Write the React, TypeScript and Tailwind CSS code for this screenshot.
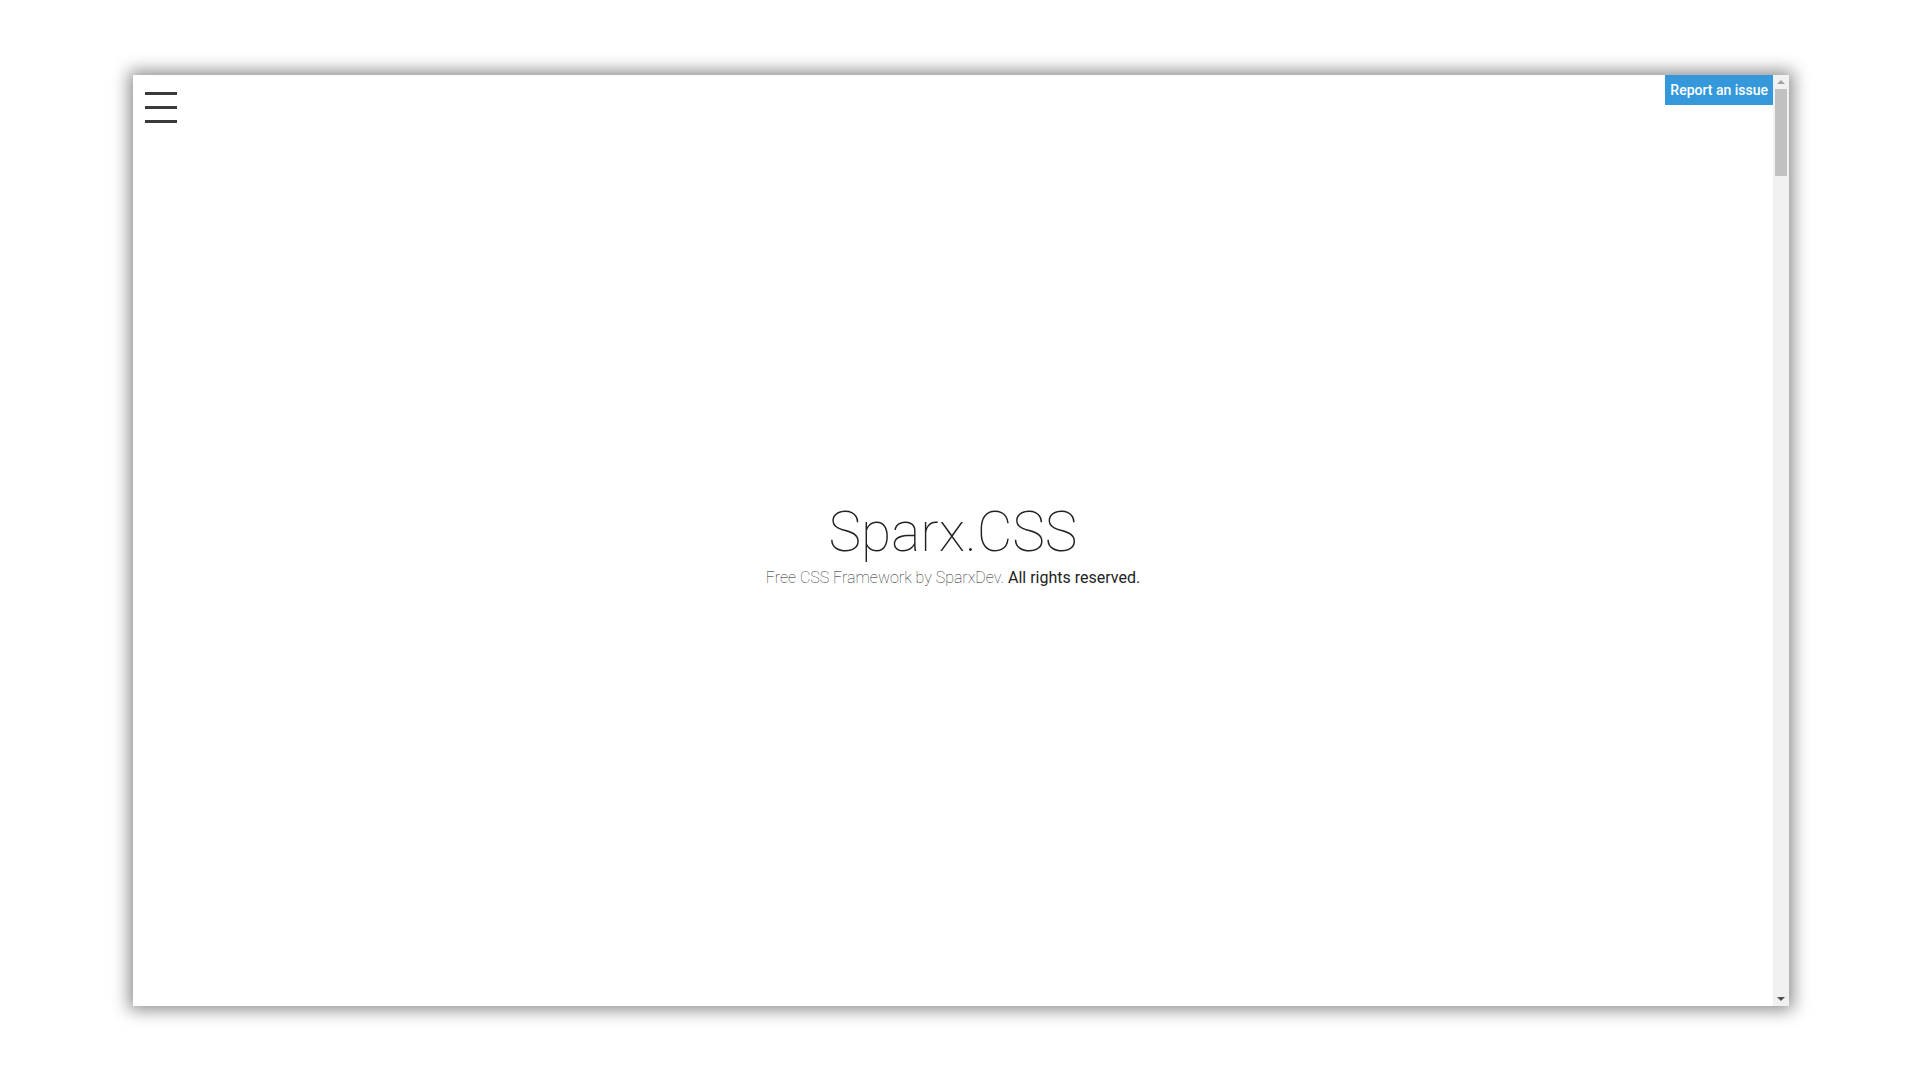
export default function App() {
  return (
    <div className="w-[1920px] h-[1080px] bg-white overflow-hidden">
      <div className="ml-[133px] mt-[75px] w-[1656px] h-[931px] flex bg-white shadow-[0_0_16px_4px_rgba(0,0,0,0.45)]">
        <main className="relative flex-1 flex flex-col items-center justify-center" style={{ fontFamily: "Roboto, 'Liberation Sans', sans-serif" }}>
          <button className="absolute left-[12px] top-[17px] flex flex-col gap-[11px] p-0">
            <span className="block w-[32px] h-[3px] bg-[#3a3a3a]" />
            <span className="block w-[32px] h-[3px] bg-[#3a3a3a]" />
            <span className="block w-[32px] h-[3px] bg-[#3a3a3a]" />
          </button>
          <a className="absolute right-0 top-0 h-[30px] px-[5px] flex items-center bg-[#3498db] text-white text-[14px] font-medium">
            Report an issue
          </a>
          <div className="flex flex-col items-center mt-[10px]">
            <h1 className="text-[55px] font-thin leading-none text-[#222]">Sparx.CSS</h1>
            <p className="mt-[10px] text-[16px] leading-none">
              <span className="font-thin text-[#222]">Free CSS Framework by SparxDev.</span>{" "}
              <span className="text-[#222]">All rights reserved.</span>
            </p>
          </div>
        </main>
        <div className="w-[16px] flex flex-col bg-[#f1f1f1]">
          <div className="h-[14px] flex items-center justify-center">
            <span className="w-0 h-0 border-l-[4px] border-r-[4px] border-b-[4px] border-l-transparent border-r-transparent border-b-[#a3a3a3]" />
          </div>
          <div className="mx-[2px] h-[87px] bg-[#c1c1c1]" />
          <div className="flex-1" />
          <div className="h-[14px] flex items-center justify-center">
            <span className="w-0 h-0 border-l-[4px] border-r-[4px] border-t-[4px] border-l-transparent border-r-transparent border-t-[#505050]" />
          </div>
        </div>
      </div>
    </div>
  );
}
